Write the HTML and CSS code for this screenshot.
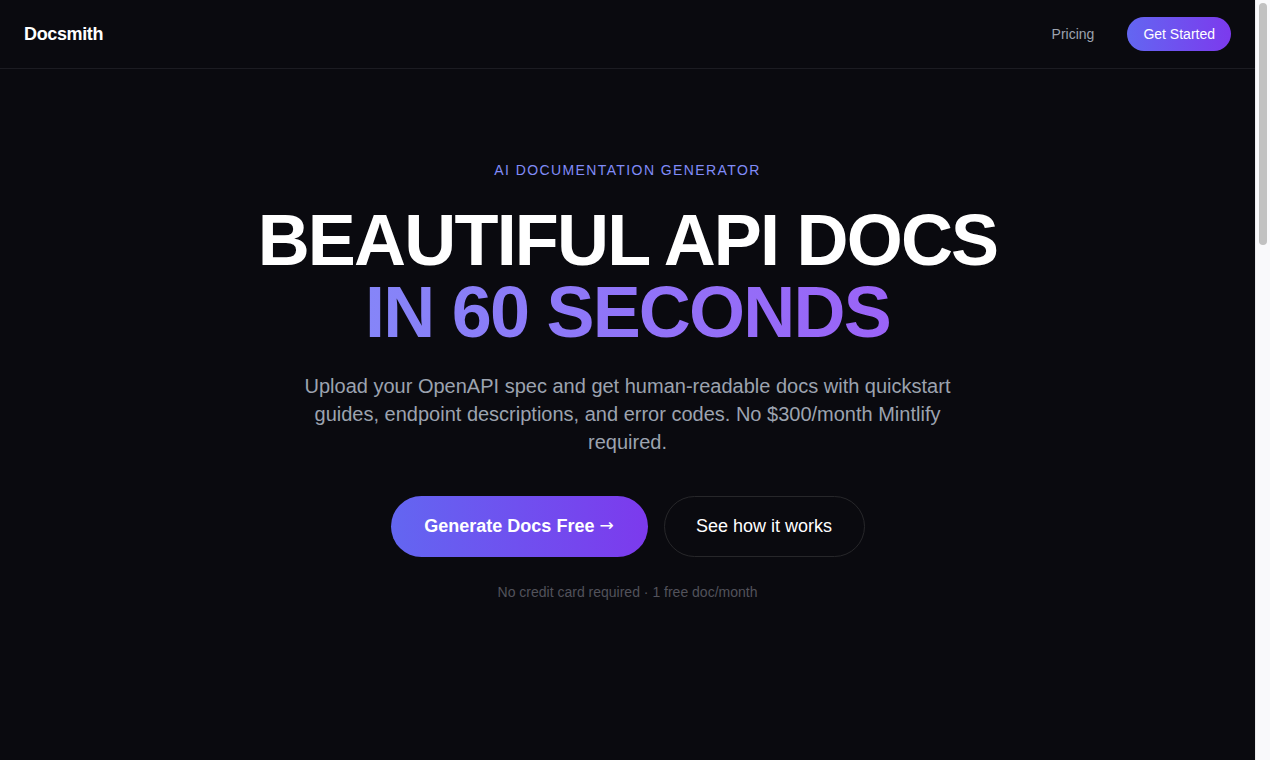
FILE: index.html
```html
<!DOCTYPE html>
<html lang="en">
<head>
<meta charset="utf-8">
<title>Docsmith</title>
<link rel="stylesheet" href="styles.css">
</head>
<body>
<div class="page">
  <header class="nav">
    <div class="brand">Docsmith</div>
    <nav class="nav-links">
      <a class="nav-link" href="#">Pricing</a>
      <a class="nav-cta" href="#">Get Started</a>
    </nav>
  </header>
  <main>
    <section class="hero">
      <p class="eyebrow">AI DOCUMENTATION GENERATOR</p>
      <h1 class="title"><span class="line">BEAUTIFUL API DOCS</span><span class="line grad">IN 60 SECONDS</span></h1>
      <p class="lead">Upload your OpenAPI spec and get human-readable docs with quickstart guides, endpoint descriptions, and error codes. No $300/month Mintlify required.</p>
      <div class="actions">
        <a class="btn btn-primary" href="#">Generate Docs Free <span class="arrow">→</span></a>
        <a class="btn btn-ghost" href="#">See how it works</a>
      </div>
      <p class="note">No credit card required · 1 free doc/month</p>
    </section>
    <section class="below"></section>
  </main>
</div>
<div class="scrollbar" aria-hidden="true"><div class="thumb"></div></div>
</body>
</html>
```
FILE: styles.css
```css
* { box-sizing: border-box; }
html, body { margin: 0; padding: 0; }
body {
  background: #0a0a0f;
  color: #fff;
  font-family: "Liberation Sans", Arial, Helvetica, sans-serif;
}
.page { margin-right: 15px; }
a { text-decoration: none; color: inherit; }
.nav {
  height: 69px;
  display: flex;
  align-items: center;
  justify-content: space-between;
  padding: 0 24px;
  border-bottom: 1px solid #1c1c22;
}
.brand { font-size: 18px; font-weight: 700; letter-spacing: -0.02em; }
.nav-links { display: flex; align-items: center; gap: 33px; }
.nav-link { font-size: 14px; color: #9ca3af; }
.nav-cta {
  font-size: 14px;
  color: #fff;
  height: 34px;
  padding: 0 16px;
  display: inline-flex;
  align-items: center;
  border-radius: 999px;
  background: linear-gradient(90deg, #6366f1, #7c3aed);
}
.hero {
  display: flex;
  flex-direction: column;
  align-items: center;
  text-align: center;
  padding-top: 91px;
}
.eyebrow {
  margin: 0;
  font-size: 14px;
  line-height: 20px;
  letter-spacing: 0.1em;
  color: #818cf8;
}
.title {
  margin: 24px 0 0;
  font-size: 72px;
  line-height: 72px;
  font-weight: 700;
  letter-spacing: -0.025em;
}
.line { display: block; }
.grad {
  background: linear-gradient(90deg, #818cf8, #9f5cf7);
  -webkit-background-clip: text;
  background-clip: text;
  color: transparent;
}
.lead {
  margin: 24px 0 0;
  max-width: 672px;
  font-size: 20px;
  line-height: 28px;
  color: #9ca3af;
}
.actions { margin-top: 40px; display: flex; gap: 16px; }
.btn {
  height: 61px;
  display: inline-flex;
  align-items: center;
  justify-content: center;
  border-radius: 999px;
  font-size: 18px;
}
.btn-primary {
  width: 257px;
  font-weight: 700;
  gap: 5px;
  background: linear-gradient(90deg, #6366f1, #7c3aed);
}
.arrow {
  font-family: "DejaVu Sans", sans-serif;
  font-weight: 400;
  font-size: 17px;
  position: relative;
  top: -2px;
}
.btn-ghost {
  width: 201px;
  border: 1px solid #27272a;
}
.note {
  margin: 25px 0 0;
  font-size: 14px;
  line-height: 20px;
  color: #52525b;
}
.below { height: 1600px; }
.scrollbar {
  position: fixed;
  top: 0;
  right: 0;
  width: 15px;
  height: 100%;
  background: #f9f9fb;
  border-left: 1px solid #ececef;
}
.thumb {
  position: absolute;
  top: 3px;
  left: 3px;
  width: 8px;
  height: 242px;
  border-radius: 4px;
  background: #c1c1c1;
}
```
